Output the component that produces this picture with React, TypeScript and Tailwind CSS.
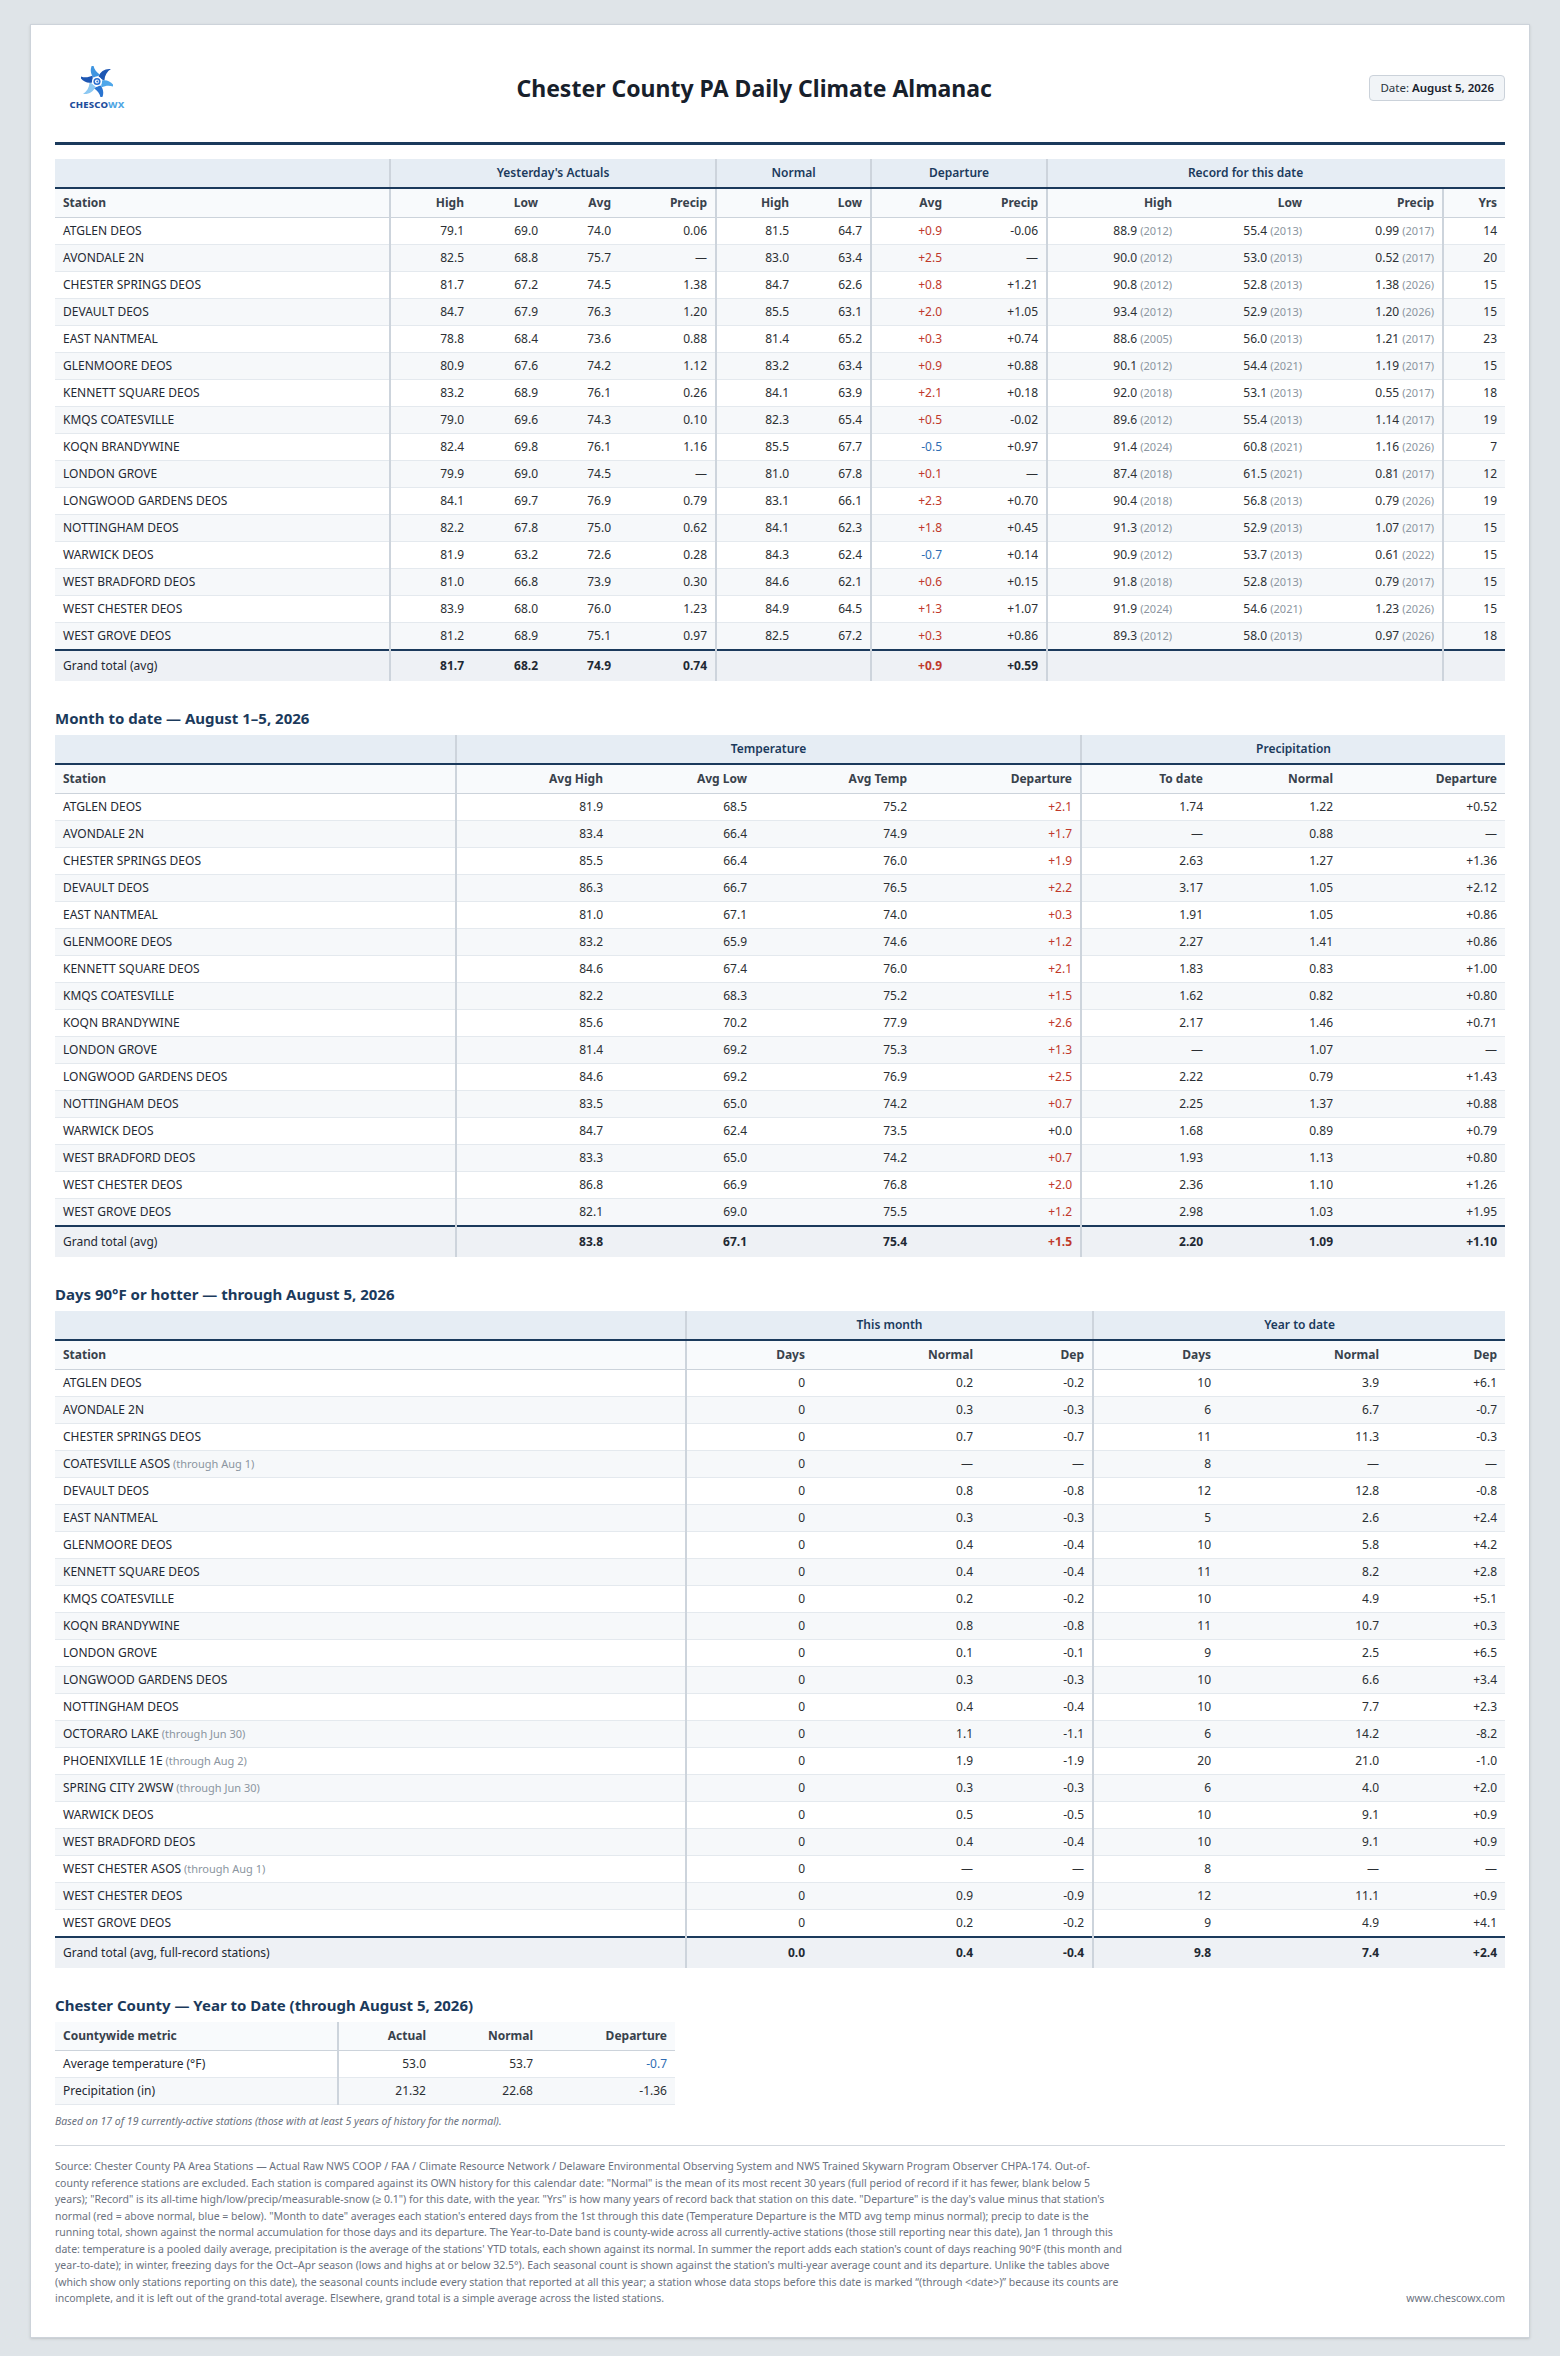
import type { ReactNode } from "react";

type Col = { label: string; w: string; sep?: boolean; left?: boolean };
type Group = { label: string; span: number; sep?: boolean };

const cellBase = "px-2 py-[5px] leading-[16px] border-b border-[#e4e9ee]";
const sepCls = "border-l-2 border-l-[#cdd4dc]";

function dep(v: string, bold = false) {
  let color = "text-[#2b2f33]";
  if (v.startsWith("+") && v !== "+0.0") color = "text-[#c0392b]";
  if (v.startsWith("-")) color = "text-[#2f6db3]";
  return <span className={bold ? `${color} font-bold` : color}>{v}</span>;
}

function rec(v: string, y: string) {
  return (
    <>
      {v} <span className="text-[11px] text-[#8b95a0]">({y})</span>
    </>
  );
}

function station(name: string, note?: string) {
  return (
    <>
      {name}
      {note && <span className="text-[11px] text-[#8b95a0]"> ({note})</span>}
    </>
  );
}

interface TableProps {
  cols: Col[];
  groups?: Group[];
  rows: ReactNode[][];
  total?: ReactNode[];
  widthCls?: string;
}

function DataTable({ cols, groups, rows, total, widthCls = "w-full" }: TableProps) {
  return (
    <table className={`${widthCls} table-fixed border-collapse text-[12px]`}>
      <colgroup>
        {cols.map((c, i) => (
          <col key={i} className={c.w} />
        ))}
      </colgroup>
      <thead>
        {groups && (
          <tr className="bg-[#e6edf4]">
            {groups.map((g, i) => (
              <th
                key={i}
                colSpan={g.span}
                className={`px-2 py-[6px] leading-[16px] text-center font-semibold text-[#1b3a5c] border-b-2 border-b-[#1b3a5c] ${g.sep ? sepCls : ""}`}
              >
                {g.label}
              </th>
            ))}
          </tr>
        )}
        <tr className="bg-[#f8fafc]">
          {cols.map((c, i) => (
            <th
              key={i}
              className={`px-2 py-[6px] leading-[16px] font-bold text-[#39424c] border-b border-b-[#ccd3db] ${c.left ? "text-left" : "text-right"} ${c.sep ? sepCls : ""}`}
            >
              {c.label}
            </th>
          ))}
        </tr>
      </thead>
      <tbody>
        {rows.map((r, ri) => (
          <tr key={ri} className={ri % 2 === 1 ? "bg-[#f6f8fa]" : "bg-white"}>
            {r.map((v, ci) => (
              <td
                key={ci}
                className={`${cellBase} ${cols[ci].left ? "text-left text-[#1f2933]" : "text-right text-[#2b2f33]"} ${cols[ci].sep ? sepCls : ""}`}
              >
                {v}
              </td>
            ))}
          </tr>
        ))}
        {total && (
          <tr className="bg-[#eef1f5]">
            {total.map((v, ci) => (
              <td
                key={ci}
                className={`px-2 py-[7px] leading-[16px] border-t-2 border-t-[#1b3a5c] ${cols[ci].left ? "text-left text-[#1f2933]" : "text-right font-bold text-[#1f2933]"} ${cols[ci].sep ? sepCls : ""}`}
              >
                {v}
              </td>
            ))}
          </tr>
        )}
      </tbody>
    </table>
  );
}

const dailyCols: Col[] = [
  { label: "Station", w: "w-[335px]", left: true },
  { label: "High", w: "w-[82px]", sep: true },
  { label: "Low", w: "w-[74px]" },
  { label: "Avg", w: "w-[73px]" },
  { label: "Precip", w: "w-[97px]" },
  { label: "High", w: "w-[81px]", sep: true },
  { label: "Low", w: "w-[74px]" },
  { label: "Avg", w: "w-[79px]", sep: true },
  { label: "Precip", w: "w-[97px]" },
  { label: "High", w: "w-[133px]", sep: true },
  { label: "Low", w: "w-[130px]" },
  { label: "Precip", w: "w-[133px]" },
  { label: "Yrs", w: "w-[62px]", sep: true },
];

const dailyGroups: Group[] = [
  { label: "", span: 1 },
  { label: "Yesterday's Actuals", span: 4, sep: true },
  { label: "Normal", span: 2, sep: true },
  { label: "Departure", span: 2, sep: true },
  { label: "Record for this date", span: 3, sep: true },
  { label: "", span: 1 },
];

const daily: string[][] = [
  ["ATGLEN DEOS", "79.1", "69.0", "74.0", "0.06", "81.5", "64.7", "+0.9", "-0.06", "88.9", "2012", "55.4", "2013", "0.99", "2017", "14"],
  ["AVONDALE 2N", "82.5", "68.8", "75.7", "—", "83.0", "63.4", "+2.5", "—", "90.0", "2012", "53.0", "2013", "0.52", "2017", "20"],
  ["CHESTER SPRINGS DEOS", "81.7", "67.2", "74.5", "1.38", "84.7", "62.6", "+0.8", "+1.21", "90.8", "2012", "52.8", "2013", "1.38", "2026", "15"],
  ["DEVAULT DEOS", "84.7", "67.9", "76.3", "1.20", "85.5", "63.1", "+2.0", "+1.05", "93.4", "2012", "52.9", "2013", "1.20", "2026", "15"],
  ["EAST NANTMEAL", "78.8", "68.4", "73.6", "0.88", "81.4", "65.2", "+0.3", "+0.74", "88.6", "2005", "56.0", "2013", "1.21", "2017", "23"],
  ["GLENMOORE DEOS", "80.9", "67.6", "74.2", "1.12", "83.2", "63.4", "+0.9", "+0.88", "90.1", "2012", "54.4", "2021", "1.19", "2017", "15"],
  ["KENNETT SQUARE DEOS", "83.2", "68.9", "76.1", "0.26", "84.1", "63.9", "+2.1", "+0.18", "92.0", "2018", "53.1", "2013", "0.55", "2017", "18"],
  ["KMQS COATESVILLE", "79.0", "69.6", "74.3", "0.10", "82.3", "65.4", "+0.5", "-0.02", "89.6", "2012", "55.4", "2013", "1.14", "2017", "19"],
  ["KOQN BRANDYWINE", "82.4", "69.8", "76.1", "1.16", "85.5", "67.7", "-0.5", "+0.97", "91.4", "2024", "60.8", "2021", "1.16", "2026", "7"],
  ["LONDON GROVE", "79.9", "69.0", "74.5", "—", "81.0", "67.8", "+0.1", "—", "87.4", "2018", "61.5", "2021", "0.81", "2017", "12"],
  ["LONGWOOD GARDENS DEOS", "84.1", "69.7", "76.9", "0.79", "83.1", "66.1", "+2.3", "+0.70", "90.4", "2018", "56.8", "2013", "0.79", "2026", "19"],
  ["NOTTINGHAM DEOS", "82.2", "67.8", "75.0", "0.62", "84.1", "62.3", "+1.8", "+0.45", "91.3", "2012", "52.9", "2013", "1.07", "2017", "15"],
  ["WARWICK DEOS", "81.9", "63.2", "72.6", "0.28", "84.3", "62.4", "-0.7", "+0.14", "90.9", "2012", "53.7", "2013", "0.61", "2022", "15"],
  ["WEST BRADFORD DEOS", "81.0", "66.8", "73.9", "0.30", "84.6", "62.1", "+0.6", "+0.15", "91.8", "2018", "52.8", "2013", "0.79", "2017", "15"],
  ["WEST CHESTER DEOS", "83.9", "68.0", "76.0", "1.23", "84.9", "64.5", "+1.3", "+1.07", "91.9", "2024", "54.6", "2021", "1.23", "2026", "15"],
  ["WEST GROVE DEOS", "81.2", "68.9", "75.1", "0.97", "82.5", "67.2", "+0.3", "+0.86", "89.3", "2012", "58.0", "2013", "0.97", "2026", "18"],
];

const mtdCols: Col[] = [
  { label: "Station", w: "w-[401px]", left: true },
  { label: "Avg High", w: "w-[155px]", sep: true },
  { label: "Avg Low", w: "w-[144px]" },
  { label: "Avg Temp", w: "w-[160px]" },
  { label: "Departure", w: "w-[166px]" },
  { label: "To date", w: "w-[130px]", sep: true },
  { label: "Normal", w: "w-[130px]" },
  { label: "Departure", w: "w-[164px]" },
];

const mtd: string[][] = [
  ["ATGLEN DEOS", "81.9", "68.5", "75.2", "+2.1", "1.74", "1.22", "+0.52"],
  ["AVONDALE 2N", "83.4", "66.4", "74.9", "+1.7", "—", "0.88", "—"],
  ["CHESTER SPRINGS DEOS", "85.5", "66.4", "76.0", "+1.9", "2.63", "1.27", "+1.36"],
  ["DEVAULT DEOS", "86.3", "66.7", "76.5", "+2.2", "3.17", "1.05", "+2.12"],
  ["EAST NANTMEAL", "81.0", "67.1", "74.0", "+0.3", "1.91", "1.05", "+0.86"],
  ["GLENMOORE DEOS", "83.2", "65.9", "74.6", "+1.2", "2.27", "1.41", "+0.86"],
  ["KENNETT SQUARE DEOS", "84.6", "67.4", "76.0", "+2.1", "1.83", "0.83", "+1.00"],
  ["KMQS COATESVILLE", "82.2", "68.3", "75.2", "+1.5", "1.62", "0.82", "+0.80"],
  ["KOQN BRANDYWINE", "85.6", "70.2", "77.9", "+2.6", "2.17", "1.46", "+0.71"],
  ["LONDON GROVE", "81.4", "69.2", "75.3", "+1.3", "—", "1.07", "—"],
  ["LONGWOOD GARDENS DEOS", "84.6", "69.2", "76.9", "+2.5", "2.22", "0.79", "+1.43"],
  ["NOTTINGHAM DEOS", "83.5", "65.0", "74.2", "+0.7", "2.25", "1.37", "+0.88"],
  ["WARWICK DEOS", "84.7", "62.4", "73.5", "+0.0", "1.68", "0.89", "+0.79"],
  ["WEST BRADFORD DEOS", "83.3", "65.0", "74.2", "+0.7", "1.93", "1.13", "+0.80"],
  ["WEST CHESTER DEOS", "86.8", "66.9", "76.8", "+2.0", "2.36", "1.10", "+1.26"],
  ["WEST GROVE DEOS", "82.1", "69.0", "75.5", "+1.2", "2.98", "1.03", "+1.95"],
];

const hotCols: Col[] = [
  { label: "Station", w: "w-[631px]", left: true },
  { label: "Days", w: "w-[127px]", sep: true },
  { label: "Normal", w: "w-[168px]" },
  { label: "Dep", w: "w-[112px]" },
  { label: "Days", w: "w-[126px]", sep: true },
  { label: "Normal", w: "w-[168px]" },
  { label: "Dep", w: "w-[118px]" },
];

const hot: string[][] = [
  ["ATGLEN DEOS", "", "0", "0.2", "-0.2", "10", "3.9", "+6.1"],
  ["AVONDALE 2N", "", "0", "0.3", "-0.3", "6", "6.7", "-0.7"],
  ["CHESTER SPRINGS DEOS", "", "0", "0.7", "-0.7", "11", "11.3", "-0.3"],
  ["COATESVILLE ASOS", "through Aug 1", "0", "—", "—", "8", "—", "—"],
  ["DEVAULT DEOS", "", "0", "0.8", "-0.8", "12", "12.8", "-0.8"],
  ["EAST NANTMEAL", "", "0", "0.3", "-0.3", "5", "2.6", "+2.4"],
  ["GLENMOORE DEOS", "", "0", "0.4", "-0.4", "10", "5.8", "+4.2"],
  ["KENNETT SQUARE DEOS", "", "0", "0.4", "-0.4", "11", "8.2", "+2.8"],
  ["KMQS COATESVILLE", "", "0", "0.2", "-0.2", "10", "4.9", "+5.1"],
  ["KOQN BRANDYWINE", "", "0", "0.8", "-0.8", "11", "10.7", "+0.3"],
  ["LONDON GROVE", "", "0", "0.1", "-0.1", "9", "2.5", "+6.5"],
  ["LONGWOOD GARDENS DEOS", "", "0", "0.3", "-0.3", "10", "6.6", "+3.4"],
  ["NOTTINGHAM DEOS", "", "0", "0.4", "-0.4", "10", "7.7", "+2.3"],
  ["OCTORARO LAKE", "through Jun 30", "0", "1.1", "-1.1", "6", "14.2", "-8.2"],
  ["PHOENIXVILLE 1E", "through Aug 2", "0", "1.9", "-1.9", "20", "21.0", "-1.0"],
  ["SPRING CITY 2WSW", "through Jun 30", "0", "0.3", "-0.3", "6", "4.0", "+2.0"],
  ["WARWICK DEOS", "", "0", "0.5", "-0.5", "10", "9.1", "+0.9"],
  ["WEST BRADFORD DEOS", "", "0", "0.4", "-0.4", "10", "9.1", "+0.9"],
  ["WEST CHESTER ASOS", "through Aug 1", "0", "—", "—", "8", "—", "—"],
  ["WEST CHESTER DEOS", "", "0", "0.9", "-0.9", "12", "11.1", "+0.9"],
  ["WEST GROVE DEOS", "", "0", "0.2", "-0.2", "9", "4.9", "+4.1"],
];

const ytdCols: Col[] = [
  { label: "Countywide metric", w: "w-[283px]", left: true },
  { label: "Actual", w: "w-[96px]", sep: true },
  { label: "Normal", w: "w-[107px]" },
  { label: "Departure", w: "w-[134px]" },
];

// footer notes, broken where the printed page breaks them
const notes = [
  "Source: Chester County PA Area Stations — Actual Raw NWS COOP / FAA / Climate Resource Network / Delaware Environmental Observing System and NWS Trained Skywarn Program Observer CHPA-174. Out-of-",
  "county reference stations are excluded. Each station is compared against its OWN history for this calendar date: \"Normal\" is the mean of its most recent 30 years (full period of record if it has fewer, blank below 5",
  "years); \"Record\" is its all-time high/low/precip/measurable-snow (≥ 0.1\") for this date, with the year. \"Yrs\" is how many years of record back that station on this date. \"Departure\" is the day's value minus that station's",
  "normal (red = above normal, blue = below). \"Month to date\" averages each station's entered days from the 1st through this date (Temperature Departure is the MTD avg temp minus normal); precip to date is the",
  "running total, shown against the normal accumulation for those days and its departure. The Year-to-Date band is county-wide across all currently-active stations (those still reporting near this date), Jan 1 through this",
  "date: temperature is a pooled daily average, precipitation is the average of the stations' YTD totals, each shown against its normal. In summer the report adds each station's count of days reaching 90°F (this month and",
  "year-to-date); in winter, freezing days for the Oct–Apr season (lows and highs at or below 32.5°). Each seasonal count is shown against the station's multi-year average count and its departure. Unlike the tables above",
  "(which show only stations reporting on this date), the seasonal counts include every station that reported at all this year; a station whose data stops before this date is marked “(through <date>)” because its counts are",
  "incomplete, and it is left out of the grand-total average. Elsewhere, grand total is a simple average across the listed stations.",
];

// swirl mark: curved arms around a small eye
function Logo() {
  const arms = [0, 60, 120, 180, 240, 300];
  const colors = ["#1d56b3", "#4ea7ea", "#2a74d0", "#8cc8f2", "#1d56b3", "#3f95e0"];
  return (
    <div className="flex w-[84px] flex-col items-center">
      <svg width="32" height="31" viewBox="0 0 40 40">
        {arms.map((a, i) => (
          <path
            key={i}
            d="M22 14 C24 7 31 3 38 4 C33 7 30 12 29.5 19 C27 18 24.5 16 22 14 Z"
            fill={colors[i]}
            transform={`rotate(${a} 20 20)`}
          />
        ))}
        <circle cx="20" cy="20" r="6.5" fill="#ffffff" />
        <circle cx="20" cy="20" r="4.6" fill="#2a6fd0" />
        <circle cx="20" cy="20" r="2.6" fill="#ffffff" />
        <circle cx="20.4" cy="20" r="1.3" fill="#2a6fd0" />
      </svg>
      <div className="mt-[3px] text-[9.5px] font-extrabold leading-[10px] tracking-[0.2px]">
        <span className="text-[#1f4e9c]">CHESCO</span>
        <span className="text-[#4fa6e4]">WX</span>
      </div>
    </div>
  );
}

function SectionTitle({ children }: { children: ReactNode }) {
  return (
    <h2 className="mt-[27px] mb-[7px] text-[15px] font-bold leading-[20px] text-[#1b3a5c]">
      {children}
    </h2>
  );
}

export default function App() {
  const dailyRows = daily.map((r) => [
    r[0], r[1], r[2], r[3], r[4], r[5], r[6], dep(r[7]), r[8],
    rec(r[9], r[10]), rec(r[11], r[12]), rec(r[13], r[14]), r[15],
  ]);
  const mtdRows = mtd.map((r) => [r[0], r[1], r[2], r[3], dep(r[4]), r[5], r[6], r[7]]);
  const hotRows = hot.map((r) => [station(r[0], r[1] || undefined), r[2], r[3], r[4], r[5], r[6], r[7]]);

  return (
    <div className="min-h-screen bg-[#dfe4e8] py-6 font-['Segoe_UI','Noto_Sans',sans-serif] text-[#1f2933]">
      <div className="mx-auto w-[1500px] border border-[#cdd3da] bg-white px-6 pt-6 pb-[30px] shadow-sm">
        <header className="flex items-center border-b-[3px] border-[#1b3a5c] pt-[11px] pb-[26px]">
          <div className="flex h-[56px] items-center">
            <Logo />
          </div>
          <h1 className="flex-1 text-center text-[23px] font-bold leading-[30px] text-[#17202b]">
            Chester County PA Daily Climate Almanac
          </h1>
          <div className="rounded-[4px] border border-[#cbd2da] bg-[#f1f4f7] px-[10px] py-[4px] text-[11.5px] leading-[16px] text-[#2b3440]">
            Date: <span className="font-semibold text-[#17202b]">August 5, 2026</span>
          </div>
        </header>

        <div className="mt-[14px]">
          <DataTable
            cols={dailyCols}
            groups={dailyGroups}
            rows={dailyRows}
            total={["Grand total (avg)", "81.7", "68.2", "74.9", "0.74", "", "", dep("+0.9", true), "+0.59", "", "", "", ""]}
          />
        </div>

        <SectionTitle>Month to date — August 1–5, 2026</SectionTitle>
        <DataTable
          cols={mtdCols}
          groups={[
            { label: "", span: 1 },
            { label: "Temperature", span: 4, sep: true },
            { label: "Precipitation", span: 3, sep: true },
          ]}
          rows={mtdRows}
          total={["Grand total (avg)", "83.8", "67.1", "75.4", dep("+1.5", true), "2.20", "1.09", "+1.10"]}
        />

        <SectionTitle>Days 90°F or hotter — through August 5, 2026</SectionTitle>
        <DataTable
          cols={hotCols}
          groups={[
            { label: "", span: 1 },
            { label: "This month", span: 3, sep: true },
            { label: "Year to date", span: 3, sep: true },
          ]}
          rows={hotRows}
          total={["Grand total (avg, full-record stations)", "0.0", "0.4", "-0.4", "9.8", "7.4", "+2.4"]}
        />

        <SectionTitle>Chester County — Year to Date (through August 5, 2026)</SectionTitle>
        <DataTable
          cols={ytdCols}
          widthCls="w-[620px]"
          rows={[
            ["Average temperature (°F)", "53.0", "53.7", dep("-0.7")],
            ["Precipitation (in)", "21.32", "22.68", "-1.36"],
          ]}
        />
        <p className="mt-2 text-[10.5px] italic leading-[16px] text-[#6b7280]">
          Based on 17 of 19 currently-active stations (those with at least 5 years of history for the normal).
        </p>

        <footer className="mt-4 flex items-end justify-between border-t border-[#d3d8de] pt-3">
          <p className="whitespace-nowrap text-[10.5px] leading-[16.5px] text-[#6b7280]">
            {notes.map((line, i) => (
              <span key={i} className="block">
                {line}
              </span>
            ))}
          </p>
          <span className="text-[10.5px] leading-[16.5px] text-[#6b7280]">www.chescowx.com</span>
        </footer>
      </div>
    </div>
  );
}
